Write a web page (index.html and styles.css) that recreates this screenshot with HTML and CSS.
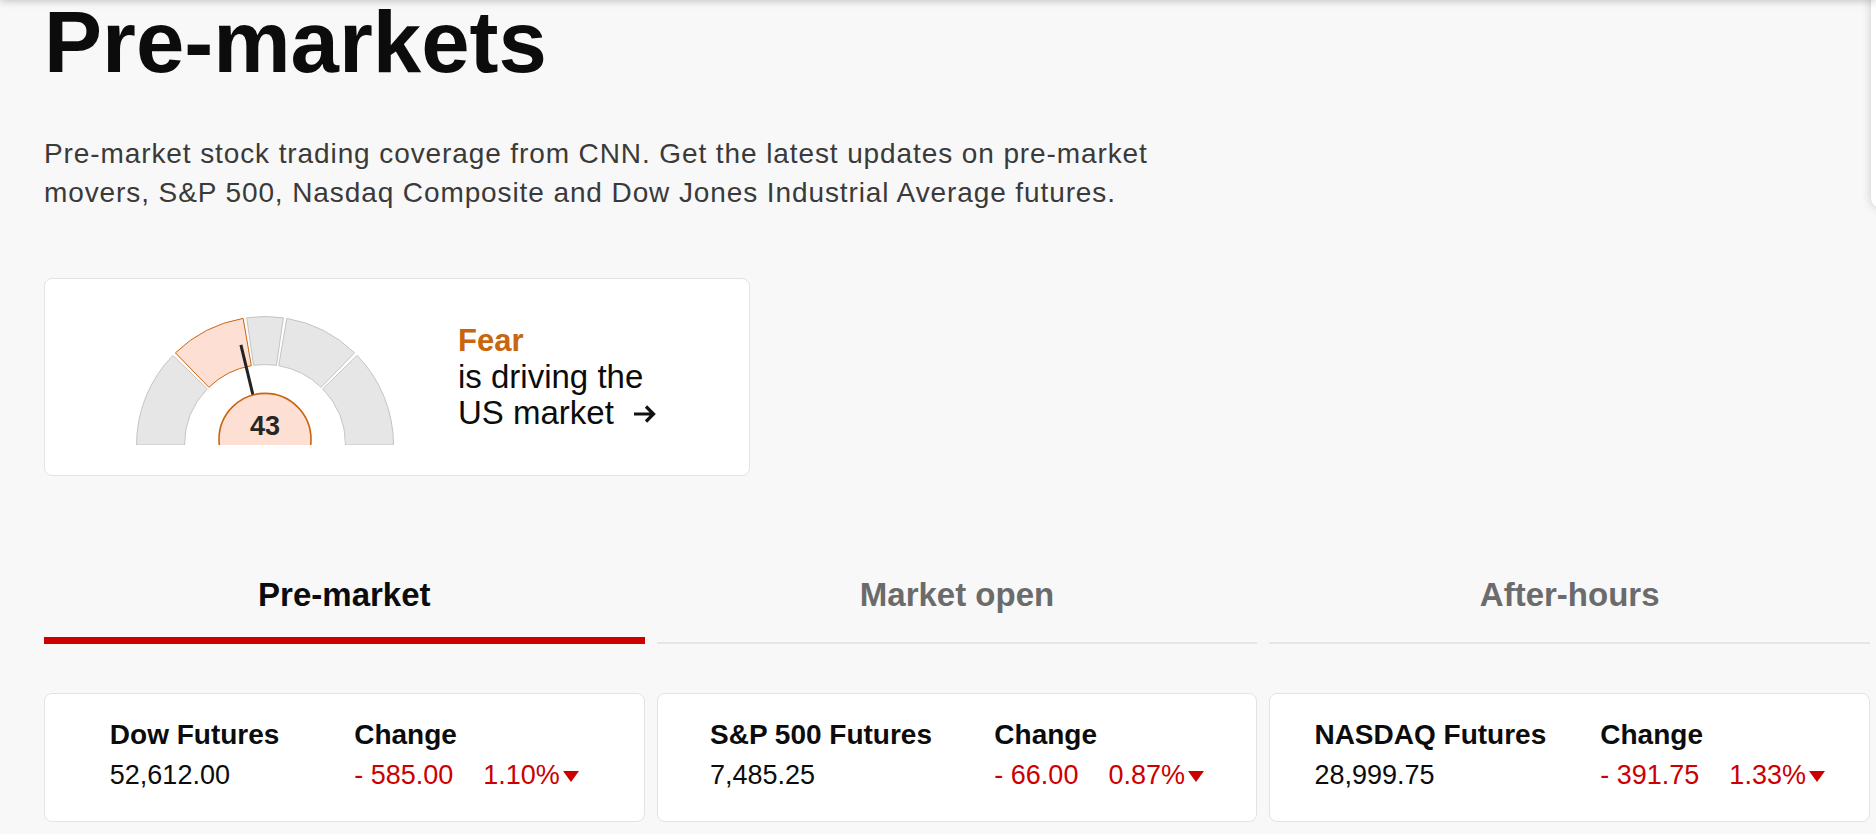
FILE: index.html
```html
<!DOCTYPE html>
<html lang="en">
<head>
    <meta charset="UTF-8">
    <meta name="viewport" content="width=device-width, initial-scale=1.0">
    <title>Pre-markets</title>
    <link rel="stylesheet" href="styles.css">
</head>
<body>
    <div class="header-shadow"></div>
    <aside class="side-panel"></aside>

    <main class="page">
        <h1>Pre-markets</h1>
        <p class="intro">Pre-market stock trading coverage from CNN. Get the latest updates on pre-market movers, S&amp;P 500, Nasdaq Composite and Dow Jones Industrial Average futures.</p>

        <section class="fg-card">
            <svg class="gauge" width="260" height="131" viewBox="0 0 260 131">
                <path class="seg" d="M1.5 131 A128.5 128.5 0 0 1 37.88 41.41 L72.29 74.88 A80.5 80.5 0 0 0 49.5 131 Z"/>
                <path class="seg seg-active" d="M40.41 38.88 A128.5 128.5 0 0 1 108.13 4.38 L116.30 51.68 A80.5 80.5 0 0 0 73.88 73.29 Z"/>
                <path class="seg" d="M111.68 3.81 A128.5 128.5 0 0 1 148.32 3.81 L141.48 51.32 A80.5 80.5 0 0 0 118.52 51.32 Z"/>
                <path class="seg" d="M151.87 4.38 A128.5 128.5 0 0 1 219.59 38.88 L186.12 73.29 A80.5 80.5 0 0 0 143.70 51.68 Z"/>
                <path class="seg" d="M222.12 41.41 A128.5 128.5 0 0 1 258.5 131 L210.5 131 A80.5 80.5 0 0 0 187.71 74.88 Z"/>
                <line class="needle" x1="118.3" y1="82.4" x2="105.9" y2="30.8"/>
                <circle class="dial" cx="130" cy="125.4" r="46"/>
                <text class="dial-value" x="130" y="120.5" text-anchor="middle">43</text>
            </svg>
            <a class="fg-link" href="#">
                <span class="fg-mood">Fear</span>
                <span class="fg-line">is driving the</span>
                <span class="fg-line">US market
                    <svg class="arrow" width="24" height="20" viewBox="0 0 24 20"><path d="M1 10 H21 M13 2.5 L20.5 10 L13 17.5"/></svg>
                </span>
            </a>
        </section>

        <nav class="tabs">
            <div class="tab active">Pre-market</div>
            <div class="tab">Market open</div>
            <div class="tab">After-hours</div>
        </nav>

        <section class="quotes">
            <div class="quote-card">
                <div class="quote-col quote-name">
                    <div class="quote-label">Dow Futures</div>
                    <div class="quote-value">52,612.00</div>
                </div>
                <div class="quote-col">
                    <div class="quote-label">Change</div>
                    <div class="quote-value down"><span class="chg">- 585.00</span>1.10%<svg class="tri" width="16" height="11" viewBox="0 0 16 11"><polygon points="0,0 16,0 8,11"/></svg></div>
                </div>
            </div>
            <div class="quote-card">
                <div class="quote-col quote-name">
                    <div class="quote-label">S&amp;P 500 Futures</div>
                    <div class="quote-value">7,485.25</div>
                </div>
                <div class="quote-col">
                    <div class="quote-label">Change</div>
                    <div class="quote-value down"><span class="chg">- 66.00</span>0.87%<svg class="tri" width="16" height="11" viewBox="0 0 16 11"><polygon points="0,0 16,0 8,11"/></svg></div>
                </div>
            </div>
            <div class="quote-card">
                <div class="quote-col quote-name">
                    <div class="quote-label">NASDAQ Futures</div>
                    <div class="quote-value">28,999.75</div>
                </div>
                <div class="quote-col">
                    <div class="quote-label">Change</div>
                    <div class="quote-value down"><span class="chg">- 391.75</span>1.33%<svg class="tri" width="16" height="11" viewBox="0 0 16 11"><polygon points="0,0 16,0 8,11"/></svg></div>
                </div>
            </div>
        </section>
    </main>
</body>
</html>
```

FILE: styles.css
```css
body {
    margin: 0;
    background: #f8f8f8;
    color: #0c0c0c;
    font-family: 'Liberation Sans', Arial, sans-serif;
    overflow: hidden;
}

/* sticky header sits just above the viewport, only its shadow shows */
.header-shadow {
    position: fixed;
    top: -20px;
    left: 0;
    right: 0;
    height: 20px;
    background: #fff;
    box-shadow: 0 0 10px rgba(0, 0, 0, 0.28);
    z-index: 5;
}

.side-panel {
    position: fixed;
    top: -20px;
    right: -300px;
    width: 305px;
    height: 228px;
    background: #fff;
    border-radius: 10px;
    box-shadow: 0 0 10px rgba(60, 40, 50, 0.22);
    z-index: 4;
}

.page {
    padding: 0 6px 0 44px;
}

h1 {
    margin: 0;
    font-size: 87px;
    line-height: 84px;
    font-weight: 700;
}

.intro {
    margin: 50px 0 0;
    max-width: 1150px;
    font-size: 28px;
    line-height: 39px;
    letter-spacing: 0.9px;
    color: #3a3a3a;
}

.fg-card {
    margin-top: 66px;
    width: 706px;
    height: 198px;
    box-sizing: border-box;
    display: flex;
    align-items: center;
    gap: 63px;
    padding-left: 90px;
    background: #fff;
    border: 1px solid #e3e3e3;
    border-radius: 8px;
}

.gauge {
    display: block;
    margin-top: 5px;
}

.seg {
    fill: #e6e6e6;
    stroke: #c4c4c4;
    stroke-width: 1;
}

.seg-active {
    fill: #fde0d3;
    stroke: #c8650f;
}

.needle {
    stroke: #222;
    stroke-width: 3;
}

.dial {
    fill: #fde0d3;
    stroke: #c8650f;
    stroke-width: 1.6;
}

.dial-value {
    font-family: 'Liberation Sans', Arial, sans-serif;
    font-size: 27px;
    font-weight: 700;
    fill: #262626;
}

.fg-link {
    display: flex;
    flex-direction: column;
    color: #0c0c0c;
    text-decoration: none;
    font-size: 33px;
    line-height: 36px;
}

.fg-mood {
    font-size: 31px;
    font-weight: 700;
    color: #c8650f;
}

.arrow {
    margin-left: 10px;
    vertical-align: 0;
    fill: none;
    stroke: #111;
    stroke-width: 3.2;
}

.tabs {
    margin-top: 99px;
    display: grid;
    grid-template-columns: repeat(3, 1fr);
    gap: 12px;
}

.tab {
    text-align: center;
    font-size: 33px;
    line-height: 40px;
    font-weight: 700;
    color: #6b6b6b;
    padding-bottom: 27px;
    border-bottom: 2px solid #e6e6e6;
}

.tab.active {
    color: #0c0c0c;
    padding-bottom: 22px;
    border-bottom: 7px solid #cc0000;
}

.quotes {
    margin-top: 49px;
    display: grid;
    grid-template-columns: repeat(3, 1fr);
    gap: 12px;
}

.quote-card {
    display: flex;
    justify-content: space-evenly;
    padding: 21px 0 26px;
    background: #fff;
    border: 1px solid #e3e3e3;
    border-radius: 8px;
}

.quote-name {
    padding-right: 10px;
}

.quote-label {
    font-size: 28px;
    line-height: 40px;
    font-weight: 700;
}

.quote-value {
    font-size: 27px;
    line-height: 40px;
    white-space: nowrap;
}

.quote-value.down {
    color: #cc0000;
}

.chg {
    margin-right: 30px;
}

.tri {
    margin-left: 3px;
    vertical-align: 2px;
    fill: #cc0000;
}
```
